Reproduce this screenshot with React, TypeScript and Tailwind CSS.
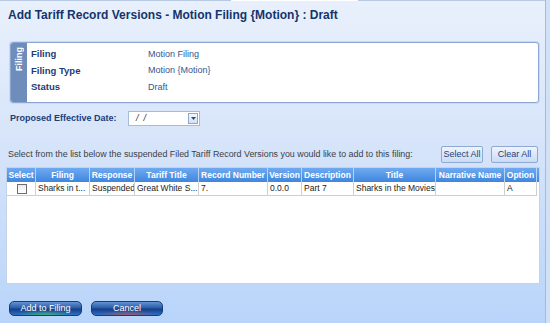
import React from "react";

const cols = [
  { h: "Select", w: 29 },
  { h: "Filing", w: 54 },
  { h: "Response", w: 45 },
  { h: "Tariff Title", w: 64 },
  { h: "Record Number", w: 69 },
  { h: "Version", w: 34 },
  { h: "Description", w: 52 },
  { h: "Title", w: 82 },
  { h: "Narrative Name", w: 69 },
  { h: "Option", w: 32 },
];

const row = ["", "Sharks in t...", "Suspended", "Great White S...", "7.", "0.0.0", "Part 7", "Sharks in the Movies", "", "A"];

export default function App() {
  return (
    <div className="w-[550px] h-[323px] overflow-hidden flex font-['Liberation_Sans',Arial,sans-serif] bg-gradient-to-b from-[#e9f0fc] via-[#d4e3f9] to-[#b8d4fa]">
      <div className="w-[546px] h-full border-r border-[#a3bbdc] flex flex-col">
        <div className="flex h-px shrink-0">
          <div className="w-[231px] bg-[#b7c9e3]" />
          <div className="w-[127px] bg-white" />
          <div className="flex-1 bg-[#b7c9e3]" />
        </div>
        <div className="pl-[8px] pt-[7px] text-[12px] leading-[15px] font-bold text-[#15346c]">
          Add Tariff Record Versions - Motion Filing {"{Motion}"} : Draft
        </div>

        <div className="ml-[10px] mt-[19px] w-[529px] h-[61px] shrink-0 rounded-[3px] border border-[#8ba6d2] bg-white flex overflow-hidden shadow-[0_0_0_1px_#c9daf2]">
          <div className="w-[16px] bg-[#6f8dbb] flex items-start justify-center pt-[4px]">
            <span className="[writing-mode:vertical-rl] rotate-180 text-white font-bold text-[9px] leading-[16px]">Filing</span>
          </div>
          <div className="flex flex-col pt-[3px] pl-[4px]">
            {[
              ["Filing", "Motion Filing"],
              ["Filing Type", "Motion {Motion}"],
              ["Status", "Draft"],
            ].map(([l, v]) => (
              <div key={l} className="flex h-[16.5px] items-center">
                <div className="w-[117px] text-[9.5px] font-bold text-[#1b3d78]">{l}</div>
                <div className="text-[9px] text-[#34558c]">{v}</div>
              </div>
            ))}
          </div>
        </div>

        <div className="ml-[10px] mt-[8px] h-[15px] flex items-center shrink-0">
          <div className="w-[118px] text-[9px] font-bold text-[#1b3d78]">Proposed Effective Date:</div>
          <div className="w-[72px] h-[15px] bg-white border border-[#a7bcd9] flex items-center justify-between pl-[7px] pr-px">
            <span className="text-[9px] italic text-[#333]">/&nbsp;&nbsp;/</span>
            <div className="w-[10px] h-[11px] border border-[#8ea6c8] bg-gradient-to-b from-[#f4f8fe] to-[#d3e1f4] flex items-center justify-center">
              <svg width="5" height="3" viewBox="0 0 5 3"><path d="M0 0h5L2.5 3z" fill="#2a4a7a" /></svg>
            </div>
          </div>
        </div>

        <div className="mt-[20px] h-[17px] flex items-center shrink-0">
          <div className="pl-[8px] text-[8.9px] text-[#3a3f47] flex-1">
            Select from the list below the suspended Filed Tariff Record Versions you would like to add to this filing:
          </div>
          <button className="w-[42px] h-[17px] rounded-[2px] border border-[#8eaad2] bg-gradient-to-b from-[#eef4fd] to-[#c9dbf4] text-[9px] text-[#1f3f78] flex items-center justify-center">Select All</button>
          <button className="ml-[8px] mr-[7px] w-[47px] h-[17px] rounded-[2px] border border-[#8eaad2] bg-gradient-to-b from-[#eef4fd] to-[#c9dbf4] text-[9px] text-[#1f3f78] flex items-center justify-center">Clear All</button>
        </div>

        <div className="ml-[6px] mt-[4px] w-[534px] h-[117px] shrink-0 bg-white border border-[#c6d3e6]">
          <div className="flex h-[14px] bg-gradient-to-b from-[#6eaaf0] to-[#3f86de]">
            {cols.map((c) => (
              <div key={c.h} style={{ width: c.w }} className="shrink-0 border-r border-[#b7d3f5] text-white font-bold text-[8.5px] flex items-center justify-center whitespace-nowrap overflow-hidden">
                {c.h}
              </div>
            ))}
          </div>
          <div className="flex h-[14px]">
            {cols.map((c, i) => (
              <div key={c.h} style={{ width: c.w }} className="shrink-0 border-r border-b border-[#cfcfcf] text-[#222] text-[8.5px] flex items-center pl-[2px] whitespace-nowrap overflow-hidden">
                {i === 0 ? (
                  <div className="ml-[8px] w-[10px] h-[10px] border border-[#6c6c6c] bg-gradient-to-b from-[#ececec] to-[#ffffff]" />
                ) : (
                  row[i]
                )}
              </div>
            ))}
          </div>
        </div>

        <div className="ml-[9px] mt-[17px] flex gap-[9px] shrink-0">
          <button className="w-[73px] h-[15px] rounded-[5px] border border-[#163d7c] bg-[radial-gradient(ellipse_40%_35%_at_50%_100%,#3fae7c_0%,transparent_100%),linear-gradient(to_bottom,#6393d4_0%,#2a5ca8_45%,#163f84_55%,#2f6fc8_100%)] text-white text-[9px] flex items-center justify-center">Add to Filing</button>
          <button className="w-[72px] h-[15px] rounded-[5px] border border-[#163d7c] bg-[radial-gradient(ellipse_40%_35%_at_50%_100%,#9a5a70_0%,transparent_100%),linear-gradient(to_bottom,#6393d4_0%,#2a5ca8_45%,#163f84_55%,#2f6fc8_100%)] text-white text-[9px] flex items-center justify-center">Cancel</button>
        </div>
      </div>
      <div className="flex-1 bg-[#d0e0f7]" />
    </div>
  );
}
